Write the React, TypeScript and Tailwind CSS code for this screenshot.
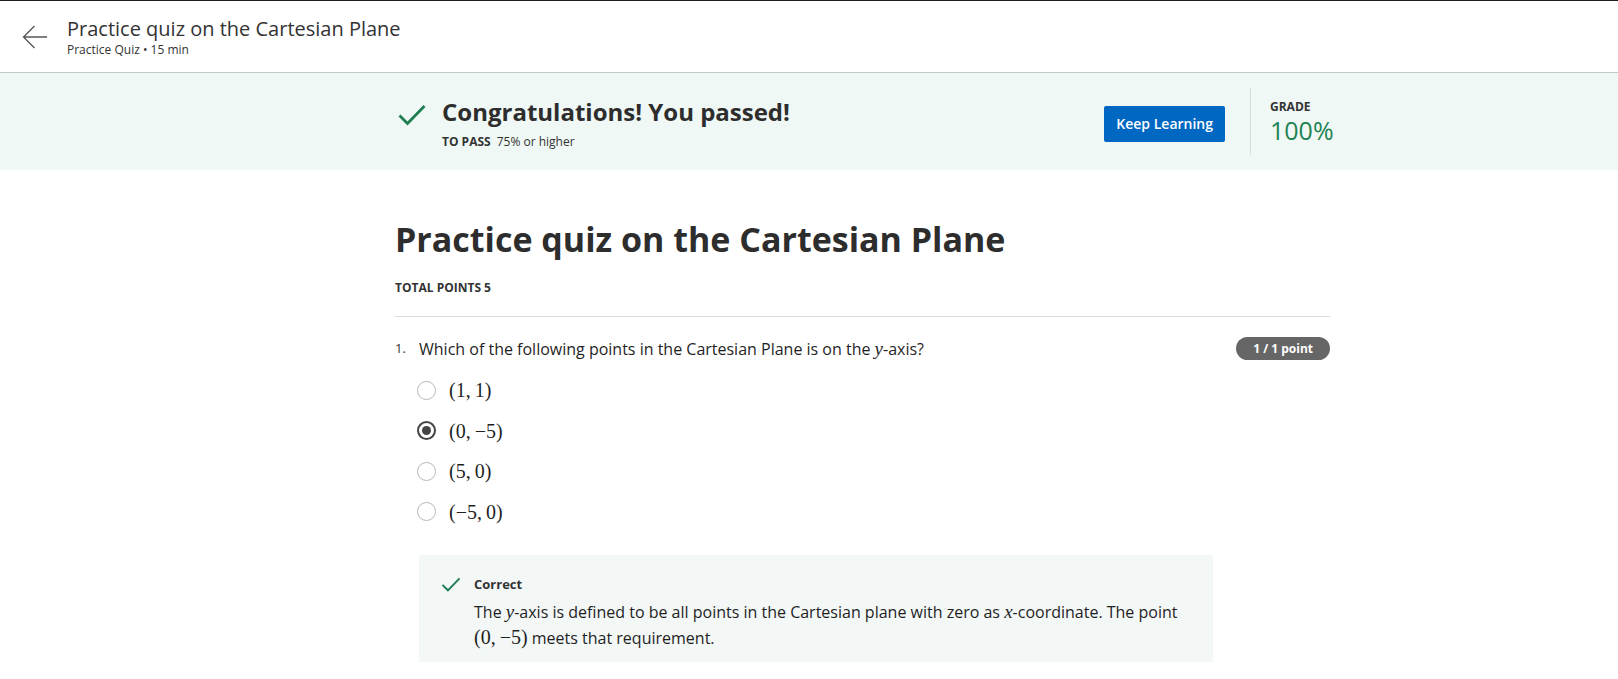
import React from "react";

const math = "font-['Liberation_Serif','DejaVu_Serif',serif]";

function Check({ className }: { className?: string }) {
  return (
    <svg viewBox="0 0 28 22" className={className} fill="none">
      <polyline points="1.5,11.5 9.5,19.5 26.5,2" stroke="#1f7d53" strokeWidth="2.8" />
    </svg>
  );
}

function Radio({ checked }: { checked?: boolean }) {
  if (checked) {
    return (
      <span className="w-[19px] h-[19px] rounded-full border-2 border-[#444] flex items-center justify-center shrink-0">
        <span className="w-[9px] h-[9px] rounded-full bg-[#444]" />
      </span>
    );
  }
  return <span className="w-[19px] h-[19px] rounded-full border-[1.5px] border-[#b8b8b8] shrink-0" />;
}

const OPTIONS = [
  { label: "(1,\u20091)", checked: false },
  { label: "(0,\u2009\u22125)", checked: true },
  { label: "(5,\u20090)", checked: false },
  { label: "(\u22125,\u20090)", checked: false },
];

export default function App() {
  return (
    <div className="min-h-screen bg-white border-t border-[#1f1f1f] font-['Open_Sans',sans-serif] text-[#333]">
      {/* Top header */}
      <header className="h-[72px] flex items-center border-b border-[#c8c8c8]">
        <div className="w-[67px] flex justify-center pl-[2px]">
          <svg viewBox="0 0 26 24" className="w-[26px] h-[24px]" fill="none">
            <path d="M25 12H1.5M12.5 1L1.5 12L12.5 23" stroke="#555" strokeWidth="1.3" />
          </svg>
        </div>
        <div className="flex flex-col">
          <h1 className="text-[20px] leading-[26px] text-[#333]">Practice quiz on the Cartesian Plane</h1>
          <p className="text-[12px] leading-[16px] text-[#333]">Practice Quiz • 15 min</p>
        </div>
      </header>

      {/* Passed banner */}
      <section className="h-[97px] bg-[#eff8f5]">
        <div className="ml-[398px] w-[932px] h-full flex items-center">
          <Check className="w-[28px] h-[22px] -mt-[14px] shrink-0" />
          <div className="ml-[16px] flex flex-col mt-[2px]">
            <h2 className="text-[24px] leading-[32px] font-bold text-[#2d2d2d]">Congratulations! You passed!</h2>
            <p className="mt-[6px] text-[12px] leading-[16px] text-[#333]">
              <span className="font-bold">TO PASS</span>
              <span className="ml-[6px]">75% or higher</span>
            </p>
          </div>
          <div className="ml-auto flex items-center h-full">
            <button className="mt-[4px] h-[36px] px-[12px] rounded-[2px] bg-[#0068c2] text-white text-[14px] font-semibold whitespace-nowrap">
              Keep Learning
            </button>
            <div className="ml-[25px] w-px h-[67px] bg-[#d9dcdb]" />
            <div className="ml-[19px] w-[60px] flex flex-col">
              <span className="text-[12px] leading-[16px] font-bold text-[#333]">GRADE</span>
              <span className="text-[25px] leading-[30px] text-[#1f8354]">100%</span>
            </div>
          </div>
        </div>
      </section>

      {/* Quiz content */}
      <main className="ml-[395px] w-[935px] pt-[46px]">
        <h1 className="text-[34px] leading-[46px] font-bold text-[#2d2d2d]">Practice quiz on the Cartesian Plane</h1>
        <p className="mt-[18px] text-[12px] leading-[16px] font-bold text-[#333]">TOTAL POINTS 5</p>
        <hr className="mt-[20px] border-0 border-t border-[#dcdcdc]" />

        <div className="pt-[20px] flex items-start">
          <span className="w-[24px] text-[13px] leading-[22px] text-[#333]">1.</span>
          <div className="flex-1">
            <div className="flex items-center justify-between">
              <p className="text-[16px] leading-[22px] text-[#1f1f1f]">
                Which of the following points in the Cartesian Plane is on the{" "}
                <i className={`${math} text-[19px]`}>y</i>-axis?
              </p>
              <span className="h-[23px] px-[17px] rounded-full bg-[#666] text-white text-[12px] font-bold flex items-center">
                1 / 1 point
              </span>
            </div>

            <div className="mt-[10px] flex flex-col">
              {OPTIONS.map((o) => (
                <div key={o.label} className="h-[40.5px] flex items-center gap-[13px] -ml-[2px]">
                  <Radio checked={o.checked} />
                  <span className={`${math} text-[20px] text-[#1f1f1f]`}>{o.label}</span>
                </div>
              ))}
            </div>

            <div className="mt-[23px] w-[794px] bg-[#f3f7f6] pl-[22px] pr-[22px] pt-[20px] pb-[11px] flex items-start">
              <Check className="w-[20px] h-[15px] mt-[2px] shrink-0" />
              <div className="ml-[13px] flex-1">
                <p className="text-[13px] leading-[18px] font-bold text-[#333]">Correct</p>
                <p className="mt-[6px] text-[16px] leading-[25px] text-[#1f1f1f]">
                  The <i className={`${math} text-[19px]`}>y</i>-axis is defined to be all points in the Cartesian plane with zero as{" "}
                  <i className={`${math} text-[19px]`}>x</i>-coordinate. The point{" "}
                  <span className={`${math} text-[20px]`}>(0,{"\u2009"}{"\u2212"}5)</span> meets that requirement.
                </p>
              </div>
            </div>
          </div>
        </div>
      </main>
    </div>
  );
}
